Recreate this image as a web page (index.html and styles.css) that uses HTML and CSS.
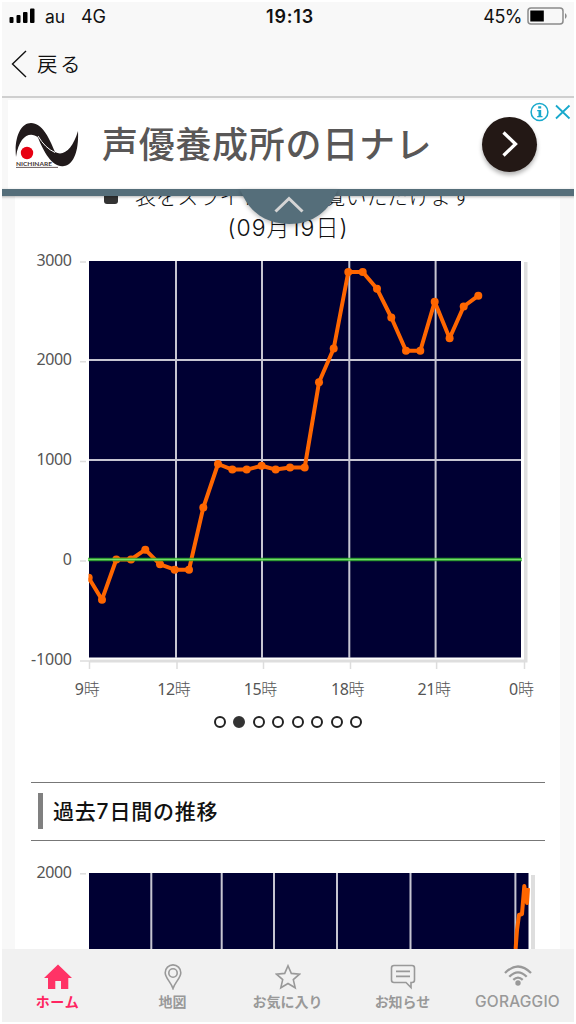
FILE: index.html
```html
<!DOCTYPE html>
<html lang="ja">
<head>
    <meta charset="UTF-8">
    <meta name="viewport" content="width=device-width, initial-scale=1.0">
    <title>過去7日間の推移</title>
    <link rel="stylesheet" href="styles.css">
</head>
<body>
    <header>
        <div class="status">
            <svg class="signal" width="26" height="16" viewBox="0 0 26 16">
                <rect x="0.5" y="10" width="4" height="6" rx="1"/>
                <rect x="7.5" y="8" width="4" height="8" rx="1"/>
                <rect x="14" y="5" width="4.5" height="11" rx="1"/>
                <rect x="21" y="1.5" width="4.5" height="14.5" rx="1"/>
            </svg>
            <span class="carrier">au</span>
            <span class="network">4G</span>
            <span class="clock">19:13</span>
            <span class="percent">45%</span>
            <svg class="battery" width="42" height="18" viewBox="0 0 42 18">
                <rect x="1" y="1" width="35" height="16" rx="3" fill="none" stroke="#8b8b8b" stroke-width="1.5"/>
                <rect x="3.3" y="3.5" width="13.5" height="11"/>
                <path d="M38 6 Q41.5 9 38 12Z" fill="#8b8b8b"/>
            </svg>
        </div>
        <div class="back">
            <svg width="16" height="28" viewBox="0 0 16 28"><path d="M15 1 L1.5 14 L15 27" fill="none" stroke="#111" stroke-width="1.4"/></svg>
            <span>戻る</span>
        </div>
    </header>

    <section class="ad">
        <svg class="ad-logo" width="64" height="46" viewBox="0 0 64 46">
            <path d="M1 35 C-1 15 6 1 16 1 C27 1 34 15 40 30 C49 35 58 26 63 9 C64 30 58 43 49 44 C38 46 29 31 23 15.5 C15 9 4 14 1 35Z" fill="#211a1b"/>
            <path d="M23 14 Q30 26 40 30.5" fill="none" stroke="#fff" stroke-width="1"/>
            <circle cx="12" cy="31" r="6.2" fill="#e70012"/>
            <text x="1" y="44" textLength="36" lengthAdjust="spacingAndGlyphs">NICHINARE</text>
            <path d="M1 45.4 H43" stroke="#433" stroke-width=".8"/>
        </svg>
        <span class="ad-title">声優養成所の日ナレ</span>
        <span class="ad-button">
            <svg width="16" height="26" viewBox="0 0 16 26"><path d="M1.5 1.5 L13.5 13 L1.5 24.5" fill="none" stroke="#fff" stroke-width="3.3"/></svg>
        </span>
        <svg class="ad-choices" width="44" height="22" viewBox="0 0 44 22">
            <g fill="none" stroke="#18a9cc" stroke-width="1.5">
                <circle cx="10.5" cy="11" r="8.4"/>
                <path d="M27 4.5 L40.5 17.5 M40.5 4.5 L27 17.5" stroke-width="1.8"/>
            </g>
            <path d="M9.2 5.3 h3 v2.2 h-3z M8.2 9 h4 v6 h1.3 v1.3 h-5.3 v-1.3 h1.3 v-4.7 h-1.3z" fill="#18a9cc"/>
        </svg>
    </section>
    <div class="bar">
        <svg class="bar-tab" width="98" height="36" viewBox="0 0 98 36">
            <path d="M0 0 C8 22 25 35 49 35 S90 22 98 0Z" fill="#556e7a"/>
            <path d="M35.5 22.5 L49 9.5 L62.5 22.5" fill="none" stroke="#d5d5d5" stroke-width="3"/>
        </svg>
    </div>

    <main>
        <p class="note"><i class="phone"></i><span>表をスライドしてご覧いただけます</span></p>
        <p class="date">(09月19日)</p>

        <svg class="chart" width="572" height="460" viewBox="2 245 572 460">
            <path d="M525.5 262 V660.5 H90" class="shade"/>
            <rect x="88" y="260" width="436" height="399.5" fill="#fff"/>
            <rect x="89" y="261" width="432" height="396.5" class="plot"/>
            <path d="M176 261 V658 M262 261 V658 M349.3 261 V658 M435.6 261 V658 M89 360 H521 M89 460 H521" class="grid"/>
            <path d="M80 262 H86 M80 361.7 H86 M80 461.5 H86 M80 561 H86 M80 661 H90 M89.5 661 V669 M177 661 V669 M263.5 661 V669 M350.5 661 V669 M436.6 661 V669 M524.5 661 V669" class="tick"/>
            <clipPath id="plot-area"><rect x="88.5" y="261" width="433" height="397"/></clipPath>
            <g id="series" clip-path="url(#plot-area)"></g>
            <path d="M88 559.5 H522" class="zero"/>
            <path d="M88 559.5 H522" class="zero-core"/>
            <g class="labels-y">
                <text x="72" y="265.5" textLength="35.5">3000</text>
                <text x="72" y="365.3" textLength="35.5">2000</text>
                <text x="72" y="465" textLength="35.5">1000</text>
                <text x="72" y="564.8">0</text>
                <text x="72" y="664.5" textLength="41">-1000</text>
            </g>
            <g class="labels-x">
                <text x="87.3" y="695" textLength="25">9<tspan>時</tspan></text>
                <text x="174" y="695" textLength="33.5">12<tspan>時</tspan></text>
                <text x="260.6" y="695" textLength="33.5">15<tspan>時</tspan></text>
                <text x="347.7" y="695" textLength="33.5">18<tspan>時</tspan></text>
                <text x="434.3" y="695" textLength="33.5">21<tspan>時</tspan></text>
                <text x="521.5" y="695" textLength="25">0<tspan>時</tspan></text>
            </g>
        </svg>

        <div class="dots">
            <i></i><i class="on"></i><i></i><i></i><i></i><i></i><i></i><i></i>
        </div>

        <h2>過去7日間の推移</h2>

        <svg class="chart" width="572" height="88" viewBox="2 861 572 88">
            <path d="M533 875 V949" class="shade"/>
            <rect x="88" y="872" width="443" height="80" fill="#fff"/>
            <rect x="89" y="873" width="439.5" height="80" class="plot"/>
            <path d="M151.3 873 V949 M221.7 873 V949 M274 873 V949 M337 873 V949 M410.5 873 V949 M515.4 873 V949" class="grid"/>
            <path d="M80 873.8 H86" class="tick"/>
            <path d="M515.6 949 L517 930 L519 915 L522 914 L524.3 886 L527 903 L528 888" class="line"/>
            <g class="labels-y"><text x="72" y="878" textLength="35.5">2000</text></g>
        </svg>
    </main>

    <nav>
        <a class="active">
            <svg width="28" height="26" viewBox="0 0 28 26"><path d="M14 .5 L28 14 H24.3 V25 H17 V17 H11.3 V25 H4 V14 H0Z" fill="#ff3366"/></svg>
            <span>ホーム</span>
        </a>
        <a>
            <svg width="18" height="26" viewBox="0 0 18 26"><path d="M9 24.5 C7 18 1.2 14 1.2 8.7 A7.8 7.8 0 0 1 16.8 8.7 C16.8 14 11 18 9 24.5Z"/><circle cx="9" cy="9" r="4.2"/></svg>
            <span>地図</span>
        </a>
        <a>
            <svg width="26" height="26" viewBox="0 0 26 26"><path d="M13 1.8 L16.3 9.4 L24.5 10.2 L18.3 15.6 L20.2 23.8 L13 19.5 L5.8 23.8 L7.7 15.6 L1.5 10.2 L9.7 9.4Z"/></svg>
            <span>お気に入り</span>
        </a>
        <a>
            <svg width="26" height="26" viewBox="0 0 26 26"><path d="M4 1.5 H22 Q24.5 1.5 24.5 4 V16 Q24.5 18.5 22 18.5 H21 V23.5 L16 18.5 H4 Q1.5 18.5 1.5 16 V4 Q1.5 1.5 4 1.5Z M6 7.4 H20 M6 12.4 H20"/></svg>
            <span>お知らせ</span>
        </a>
        <a>
            <svg width="30" height="26" viewBox="0 0 30 26"><path d="M2 9 Q15 -4 28 9 M6.3 12.7 Q15 4 23.7 12.7 M10.3 15.8 Q15 11.5 19.7 15.8" stroke-width="2.3"/><circle cx="15" cy="19" r="2.7" class="wifi-dot"/></svg>
            <span class="latin">GORAGGIO</span>
        </a>
    </nav>

    <script>
        const points = [
            [88.7, 577.7], [102, 599.7], [116.3, 559.5], [131, 559.5], [145.3, 549.7],
            [160, 564.3], [174.7, 569.7], [189, 569.7], [203.3, 507.6], [218, 464],
            [232.3, 469.6], [246.7, 469.6], [261.6, 465.8], [275.7, 469.6], [290, 467.6],
            [304.7, 467.6], [319, 382.3], [333.7, 348.5], [348.3, 272], [362.7, 272],
            [377, 288.8], [391.3, 317.5], [406, 350.7], [420.3, 350.7], [434.7, 301.8],
            [449.6, 338.3], [463.7, 306.5], [478.3, 295.7]
        ];
        let marks = `<polyline class="line" points="${points.join(' ')}"/>`;
        points.forEach(([x, y]) => {
            marks += `<circle class="point" cx="${x}" cy="${y}" r="4"/>`;
        });
        document.getElementById('series').innerHTML = marks;
    </script>
</body>
</html>
```

FILE: styles.css
```css
* {
    box-sizing: border-box;
}
body {
    margin: 0;
    width: 576px;
    height: 1024px;
    border: 2px solid #fff;
    display: flex;
    flex-direction: column;
    overflow: hidden;
    background: #f8f8f8;
    font-family: "Noto Sans CJK JP", sans-serif;
    color: #111;
}
header {
    height: 96px;
    flex: none;
    border-bottom: 2px solid #cfcfcf;
}
.status {
    height: 28px;
    display: grid;
    grid-template-columns: 26px 20px 28px 1fr 50px 42px;
    align-items: center;
    padding: 0 5px 0 7px;
    font-family: Inter, sans-serif;
    font-size: 18px;
    letter-spacing: -0.2px;
}
.signal {
    margin-top: -3px;
}
.carrier {
    padding-left: 10px;
    font-size: 17.5px;
}
.network {
    padding-left: 26px;
}
.clock {
    font-weight: 600;
    letter-spacing: 0.8px;
    padding-left: 183px;
}
.percent {
    text-align: right;
    padding-right: 5px;
    letter-spacing: -0.5px;
}
.back {
    display: flex;
    align-items: center;
    gap: 10px;
    height: 66px;
    padding: 2px 0 0 9px;
    font-size: 20.5px;
    letter-spacing: 2.5px;
    font-weight: 350;
}
.back span {
    margin-top: -3px;
}
.ad {
    position: relative;
    height: 89px;
    flex: none;
    margin: 2px 4px 0 6px;
    background: #fff;
    display: flex;
    align-items: center;
}
.ad-logo {
    margin: 0 0 0 7px;
    flex: none;
}
.ad-logo text {
    font: bold 6px Lato, sans-serif;
    fill: #433;
}
.ad-title {
    width: 340px;
    margin: -5px 0 0 23px;
    font-size: 36px;
    font-weight: 500;
    letter-spacing: 0.7px;
    color: #595757;
    white-space: nowrap;
}
.ad-button {
    width: 55px;
    height: 55px;
    margin: -1px 0 0 40px;
    border-radius: 50%;
    background: #231815;
    box-shadow: 0 3px 4px rgba(0, 0, 0, .3);
    display: flex;
    align-items: center;
    justify-content: center;
}
.ad-choices {
    position: absolute;
    right: -3px;
    top: 1px;
}
.bar {
    position: relative;
    z-index: 1;
    height: 7px;
    flex: none;
    margin: 0 -2px;
    background: #556e7a;
    box-shadow: 0 1px 3px rgba(0, 0, 0, .3);
}
.bar-tab {
    position: absolute;
    left: 240px;
    top: 0;
    filter: drop-shadow(0 2px 2px rgba(0, 0, 0, .25));
}
main {
    flex: 1;
    min-height: 0;
    overflow: hidden;
    background: linear-gradient(to right, transparent 13px, #fff 13px, #fff 558px, transparent 558px);
}
p {
    margin: 0;
    text-align: center;
    font-weight: 300;
}
.note {
    display: flex;
    justify-content: center;
    gap: 17px;
    height: 30px;
    margin-top: -16px;
    font-size: 21px;
    letter-spacing: 0.1px;
    line-height: 30px;
    white-space: nowrap;
}
.phone {
    width: 14px;
    height: 24px;
    border-radius: 3px;
    background: #333;
}
.date {
    height: 35px;
    font-family: "Liberation Sans", "Noto Sans CJK JP", sans-serif;
    font-family: Inter, "Noto Sans CJK JP", sans-serif;
    font-size: 23px;
    letter-spacing: 1px;
    line-height: 36px;
}
.chart {
    display: block;
}
.plot {
    fill: #000033;
}
.shade {
    fill: none;
    stroke: #dedede;
    stroke-width: 4;
}
.grid {
    stroke: #c6c5d2;
    stroke-width: 2;
}
.tick {
    stroke: #ddd;
    stroke-width: 1.5;
}
.zero {
    stroke: #22a822;
    stroke-opacity: .8;
    stroke-width: 3.6;
}
.zero-core {
    stroke: #8bf07a;
    stroke-opacity: .8;
    stroke-width: 1.6;
}
.line {
    fill: none;
    stroke: #ff6600;
    stroke-width: 4;
    stroke-linejoin: round;
}
.point {
    fill: #ff6600;
}
.labels-y,
.labels-x {
    font-family: "Noto Sans", "Noto Sans CJK JP", sans-serif;
    font-size: 16px;
    fill: #555;
}
.labels-y {
    text-anchor: end;
}
.labels-x {
    text-anchor: middle;
}
.labels-x tspan {
    font-weight: 300;
}
.dots {
    display: flex;
    justify-content: center;
    gap: 7.5px;
    height: 77px;
    padding-top: 10.5px;
}
.dots i {
    width: 12px;
    height: 12px;
    border: 2px solid #222;
    border-radius: 50%;
}
.dots .on {
    background: #333;
    border-color: #333;
}
h2 {
    margin: 0 29px 20px;
    height: 59px;
    padding: 10px 7px;
    border-top: 1px solid #777;
    border-bottom: 1px solid #777;
    font-family: Inter, "Noto Sans CJK JP", sans-serif;
    font-size: 21px;
    font-weight: 500;
    line-height: 37px;
    letter-spacing: 0.8px;
}
h2::before {
    content: "";
    display: inline-block;
    width: 5px;
    height: 36px;
    margin-right: 10px;
    background: #808080;
    vertical-align: top;
}
nav {
    height: 73px;
    flex: none;
    display: grid;
    grid-template-columns: repeat(5, 115px);
    margin-left: -2px;
    background: #f1f1f1;
}
nav a {
    display: flex;
    flex-direction: column;
    align-items: center;
    padding-top: 15px;
    color: #999;
    font-size: 14px;
    font-weight: 700;
    line-height: 22px;
    white-space: nowrap;
}
nav svg {
    fill: none;
    stroke: #999;
    stroke-width: 1.6;
}
nav .active {
    color: #ff2561;
    letter-spacing: 0.7px;
}
nav .active svg {
    stroke: none;
}
.wifi-dot {
    fill: #999;
    stroke: none;
}
nav .latin {
    padding-top: 1px;
    font-family: Inter, sans-serif;
    font-size: 15.5px;
    font-weight: 500;
    letter-spacing: 0.2px;
}
```
